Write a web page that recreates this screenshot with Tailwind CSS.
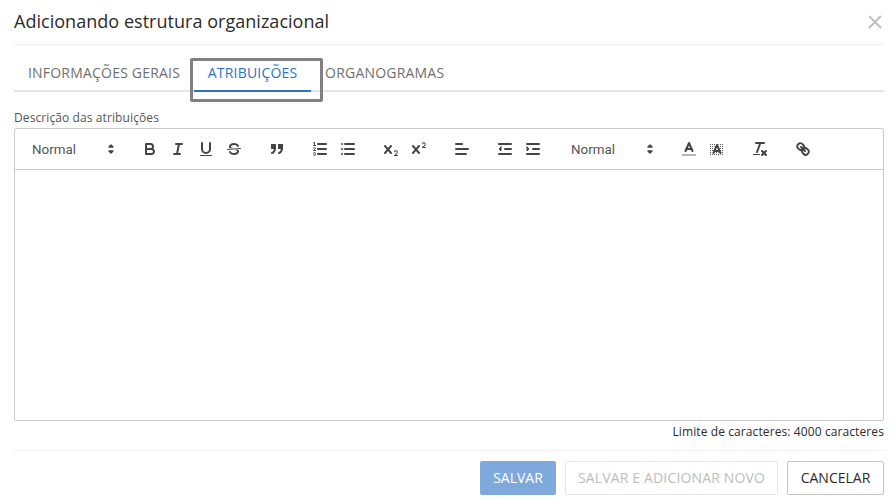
<!DOCTYPE html>
<html lang="pt-BR">
<head>
  <meta charset="UTF-8" />
  <title>Adicionando estrutura organizacional</title>
  <script src="https://cdn.jsdelivr.net/npm/@tailwindcss/browser@4"></script>
</head>
<body class="bg-white font-['Open_Sans',sans-serif] text-[#212529] overflow-hidden">
  <div class="h-[499px] w-[896px] pl-[14px] pr-[12px] flex flex-col">
    <!-- Header -->
    <header class="h-[45px] shrink-0 flex justify-between items-center border-b border-[#f1f1f3] pb-[2px]">
      <h1 class="text-[18px] tracking-[0.03px] leading-6 text-[#2b2b2b]">Adicionando estrutura organizacional</h1>
      <button class="mt-[1px] mr-[2px]">
        <svg viewBox="0 0 14 14" class="w-[14px] h-[14px]" fill="none" stroke="#bdbdbd" stroke-width="1.8"><path d="M1 1l12 12M13 1L1 13"/></svg>
      </button>
    </header>

    <!-- Tabs -->
    <nav class="relative h-[47px] shrink-0 flex border-b-2 border-[#e3e4e8] text-[14px] tracking-[0.2px] text-[#6f6f6f]">
      <div class="pl-[14px] pr-[14px] pt-[18px] leading-[20px]">INFORMAÇÕES GERAIS</div>
      <div class="w-[117px] h-[47px] border-b-2 border-[#2f72c4] text-center pt-[18px] leading-[20px] font-medium text-[#2f72c4]">ATRIBUIÇÕES</div>
      <div class="pl-[14px] pt-[18px] leading-[20px]">ORGANOGRAMAS</div>
      <div class="absolute left-[176px] top-[13px] w-[133px] h-[44px] border-[3px] border-[#808080] rounded-[2px]"></div>
    </nav>

    <label class="block mt-[18px] text-[12px] tracking-[0.1px] leading-[16px] text-[#555]">Descrição das atribuições</label>

    <!-- Editor -->
    <div class="mt-[2px] h-[293px] shrink-0 flex flex-col border border-[#ccc] rounded-[2px]">
      <div class="h-[41px] shrink-0 flex items-center pl-[8px] border-b border-[#ccc]">
        <div class="w-[98px] h-6 mr-[15px] flex items-center justify-between font-['Roboto',sans-serif] text-[13.4px] text-[#555] pl-[9px]">
          <span class="pt-[2px]">Normal</span>
          <svg viewBox="0 0 18 18" class="w-[18px] h-[18px] mr-[1px]" fill="#444" stroke="#444" stroke-width="1.5" stroke-linejoin="round"><polygon points="7 11 9 13 11 11 7 11"/><polygon points="7 7 9 5 11 7 7 7"/></svg>
        </div>

        <div class="flex mr-[15px]">
          <div class="w-7 h-6 flex items-center justify-center"><svg viewBox="0 0 18 18" class="w-[18px] h-[18px]" fill="none" stroke="#444" stroke-width="2" stroke-linecap="round" stroke-linejoin="round"><path d="M5,4H9.5A2.5,2.5,0,0,1,12,6.5v0A2.5,2.5,0,0,1,9.5,9H5A0,0,0,0,1,5,9V4A0,0,0,0,1,5,4Z"/><path d="M5,9h5.5A2.5,2.5,0,0,1,13,11.5v0A2.5,2.5,0,0,1,10.5,14H5a0,0,0,0,1,0,0V9A0,0,0,0,1,5,9Z"/></svg></div>
          <div class="w-7 h-6 flex items-center justify-center"><svg viewBox="0 0 18 18" class="w-[18px] h-[18px]" fill="none" stroke="#444" stroke-width="2" stroke-linecap="round"><line x1="7" x2="13" y1="4" y2="4"/><line x1="5" x2="11" y1="14" y2="14"/><line x1="8" x2="10" y1="14" y2="4"/></svg></div>
          <div class="w-7 h-6 flex items-center justify-center"><svg viewBox="0 0 18 18" class="w-[18px] h-[18px]" fill="none" stroke="#444" stroke-width="2" stroke-linecap="round"><path d="M5,3V9a4.012,4.012,0,0,0,4,4H9a4.012,4.012,0,0,0,4-4V3"/><rect fill="#444" stroke="none" height="1" rx=".5" ry=".5" width="12" x="3" y="15"/></svg></div>
          <div class="w-7 h-6 flex items-center justify-center"><svg viewBox="0 0 18 18" class="w-[18px] h-[18px]" fill="#444"><line stroke="#444" stroke-linecap="round" x1="15.5" x2="2.5" y1="8.5" y2="9.5"/><path d="M9.007,8C6.542,7.791,6,7.519,6,6.5,6,5.792,7.283,5,9,5c1.571,0,2.765.679,2.969,1.309a1,1,0,0,0,1.9-.617C13.356,4.106,11.354,3,9,3,6.2,3,4,4.538,4,6.5a3.2,3.2,0,0,0,.5,1.843Z"/><path d="M8.984,10C11.457,10.208,12,10.479,12,11.5c0,.708-1.283,1.5-3,1.5-1.571,0-2.765-.679-2.969-1.309a1,1,0,1,0-1.9.617C4.644,13.894,6.646,15,9,15c2.8,0,5-1.538,5-3.5a3.2,3.2,0,0,0-.5-1.843Z"/></svg></div>
        </div>

        <div class="flex mr-[15px]">
          <div class="w-7 h-6 flex items-center justify-center"><svg viewBox="0 0 18 18" class="w-[18px] h-[18px]" fill="none" stroke="#444" stroke-width="2" stroke-linecap="round"><rect fill="#444" height="3" width="3" x="4" y="5"/><rect fill="#444" height="3" width="3" x="11" y="5"/><path d="M7,8c0,4.031-3,5-3,5"/><path d="M14,8c0,4.031-3,5-3,5"/></svg></div>
        </div>

        <div class="flex mr-[15px]">
          <div class="w-7 h-6 flex items-center justify-center"><svg viewBox="0 0 18 18" class="w-[18px] h-[18px]" fill="none" stroke="#444" stroke-width="2" stroke-linecap="round" stroke-linejoin="round"><line x1="7" x2="15" y1="4" y2="4"/><line x1="7" x2="15" y1="9" y2="9"/><line x1="7" x2="15" y1="14" y2="14"/><line stroke-width="1" x1="2.5" x2="4.5" y1="5.5" y2="5.5"/><path fill="#444" stroke="none" d="M3.5,6A0.5,0.5,0,0,1,3,5.5V3.085l-0.276.138A0.5,0.5,0,0,1,2.053,3c-0.124-.247-0.023-0.324.224-0.447l1-.5A0.5,0.5,0,0,1,4,2.5v3A0.5,0.5,0,0,1,3.5,6Z"/><path stroke-width="1" d="M4.5,10.5h-2c0-.234,1.85-1.076,1.85-2.234A0.959,0.959,0,0,0,2.5,8.156"/><path stroke-width="1" d="M2.5,14.846a0.959,0.959,0,0,0,1.85-.109A0.7,0.7,0,0,0,3.75,14a0.688,0.688,0,0,0,.6-0.736,0.959,0.959,0,0,0-1.85-.109"/></svg></div>
          <div class="w-7 h-6 flex items-center justify-center"><svg viewBox="0 0 18 18" class="w-[18px] h-[18px]" fill="none" stroke="#444" stroke-width="2" stroke-linecap="round"><line x1="6" x2="15" y1="4" y2="4"/><line x1="6" x2="15" y1="9" y2="9"/><line x1="6" x2="15" y1="14" y2="14"/><line x1="3" x2="3" y1="4" y2="4"/><line x1="3" x2="3" y1="9" y2="9"/><line x1="3" x2="3" y1="14" y2="14"/></svg></div>
        </div>

        <div class="flex mr-[15px]">
          <div class="w-7 h-6 flex items-center justify-center"><svg viewBox="0 0 18 18" class="w-[18px] h-[18px]" fill="#444"><path d="M15.5,15H13.861a3.858,3.858,0,0,0,1.914-2.975,1.8,1.8,0,0,0-1.6-1.751A1.921,1.921,0,0,0,12.021,11.7a0.50013,0.50013,0,1,0,.957.291h0a0.914,0.914,0,0,1,1.053-.725,0.81,0.81,0,0,1,.744.762c0,1.076-1.16971,1.86982-1.93971,2.43082A1.45639,1.45639,0,0,0,12,15.5a0.5,0.5,0,0,0,.5.5h3A0.5,0.5,0,0,0,15.5,15Z"/><path d="M9.65,5.241a1,1,0,0,0-1.409.108L6,7.964,3.759,5.349A1,1,0,0,0,2.192,6.59178Q2.21541,6.6213,2.241,6.649L4.684,9.5,2.241,12.35A1,1,0,0,0,3.71,13.70722q0.02557-.02768.049-0.05722L6,11.036,8.241,13.65a1,1,0,1,0,1.567-1.24277Q9.78459,12.3777,9.759,12.35L7.316,9.5,9.759,6.651A1,1,0,0,0,9.65,5.241Z"/></svg></div>
          <div class="w-7 h-6 flex items-center justify-center"><svg viewBox="0 0 18 18" class="w-[18px] h-[18px]" fill="#444"><path d="M15.5,7H13.861a4.015,4.015,0,0,0,1.914-2.975,1.8,1.8,0,0,0-1.6-1.751A1.922,1.922,0,0,0,12.021,3.7a0.5,0.5,0,1,0,.957.291,0.917,0.917,0,0,1,1.053-.725,0.81,0.81,0,0,1,.744.762c0,1.077-1.164,1.925-1.934,2.486A1.423,1.423,0,0,0,12,7.5a0.5,0.5,0,0,0,.5.5h3A0.5,0.5,0,0,0,15.5,7Z"/><path d="M9.651,5.241a1,1,0,0,0-1.41.108L6,7.964,3.759,5.349a1,1,0,1,0-1.519,1.3L4.683,9.5,2.241,12.35a1,1,0,1,0,1.519,1.3L6,11.036,8.241,13.65a1,1,0,0,0,1.519-1.3L7.317,9.5,9.759,6.651A1,1,0,0,0,9.651,5.241Z"/></svg></div>
        </div>

        <div class="flex mr-[15px]">
          <div class="w-7 h-6 flex items-center justify-center"><svg viewBox="0 0 18 18" class="w-[18px] h-[18px]" fill="none" stroke="#444" stroke-width="2" stroke-linecap="round"><line x1="3" x2="15" y1="9" y2="9"/><line x1="3" x2="13" y1="14" y2="14"/><line x1="3" x2="9" y1="4" y2="4"/></svg></div>
        </div>

        <div class="flex mr-[15px]">
          <div class="w-7 h-6 flex items-center justify-center"><svg viewBox="0 0 18 18" class="w-[18px] h-[18px]" fill="none" stroke="#444" stroke-width="2" stroke-linecap="round" stroke-linejoin="round"><line x1="3" x2="15" y1="14" y2="14"/><line x1="3" x2="15" y1="4" y2="4"/><line x1="9" x2="15" y1="9" y2="9"/><polygon fill="#444" stroke-width="1" points="5 7 5 11 3 9 5 7"/></svg></div>
          <div class="w-7 h-6 flex items-center justify-center"><svg viewBox="0 0 18 18" class="w-[18px] h-[18px]" fill="none" stroke="#444" stroke-width="2" stroke-linecap="round" stroke-linejoin="round"><line x1="3" x2="15" y1="14" y2="14"/><line x1="3" x2="15" y1="4" y2="4"/><line x1="9" x2="15" y1="9" y2="9"/><polygon fill="#444" stroke-width="1" points="3 7 3 11 5 9 3 7"/></svg></div>
        </div>

        <div class="w-[98px] h-6 mr-[15px] flex items-center justify-between font-['Roboto',sans-serif] text-[13.4px] text-[#555] pl-[9px]">
          <span class="pt-[2px]">Normal</span>
          <svg viewBox="0 0 18 18" class="w-[18px] h-[18px] mr-[1px]" fill="#444" stroke="#444" stroke-width="1.5" stroke-linejoin="round"><polygon points="7 11 9 13 11 11 7 11"/><polygon points="7 7 9 5 11 7 7 7"/></svg>
        </div>

        <div class="flex mr-[15px]">
          <div class="w-7 h-6 flex items-center justify-center"><svg viewBox="0 0 18 18" class="w-[18px] h-[18px]" fill="none" stroke="#444" stroke-width="2" stroke-linecap="round" stroke-linejoin="round"><line stroke="#b5b5b5" stroke-linecap="square" x1="3" x2="15" y1="15" y2="15"/><polyline points="5.5 11 9 3 12.5 11"/><line x1="11.63" x2="6.38" y1="9" y2="9"/></svg></div>
          <div class="w-7 h-6 flex items-center justify-center"><svg viewBox="0 0 18 18" class="w-[18px] h-[18px]" fill="none" stroke="#444" stroke-width="2" stroke-linecap="round" stroke-linejoin="round"><defs><pattern id="dots" width="2" height="2" patternUnits="userSpaceOnUse"><rect x="0" y="0" width="1" height="1" fill="#555" stroke="none"/></pattern></defs><rect x="2" y="3" width="14" height="13" fill="url(#dots)" stroke="none"/><polyline stroke="#fff" stroke-width="3" points="5.5 13 9 5 12.5 13"/><polyline points="5.5 13 9 5 12.5 13"/><line x1="11.63" x2="6.38" y1="11" y2="11"/></svg></div>
        </div>

        <div class="flex mr-[15px]">
          <div class="w-7 h-6 flex items-center justify-center"><svg viewBox="0 0 18 18" class="w-[18px] h-[18px]" fill="none" stroke="#444" stroke-width="2" stroke-linecap="round"><line x1="5" x2="13" y1="3" y2="3"/><line x1="6" x2="9.35" y1="12" y2="3"/><line x1="11" x2="15" y1="11" y2="15"/><line x1="15" x2="11" y1="11" y2="15"/><rect fill="#444" stroke="none" height="1" rx=".5" ry=".5" width="7" x="2" y="14"/></svg></div>
        </div>

        <div class="flex">
          <div class="w-7 h-6 flex items-center justify-center"><svg viewBox="0 0 18 18" class="w-[18px] h-[18px]" fill="none" stroke="#444" stroke-width="2" stroke-linecap="round"><line x1="7" x2="11" y1="7" y2="11"/><path d="M8.9,4.577a3.476,3.476,0,0,1,.36,4.679A3.476,3.476,0,0,1,4.577,8.9C3.185,7.5,2.035,6.4,4.217,4.217S7.5,3.185,8.9,4.577Z"/><path d="M13.423,9.1a3.476,3.476,0,0,0-4.679-.36,3.476,3.476,0,0,0,.36,4.679c1.392,1.392,2.5,2.542,4.679.36S14.815,10.5,13.423,9.1Z"/></svg></div>
        </div>
      </div>
      <div class="flex-1"></div>
    </div>

    <p class="mt-[3px] text-right text-[12px] tracking-[0.1px] leading-[16px] text-[#2b2b2b]">Limite de caracteres: 4000 caracteres</p>

    <!-- Footer -->
    <footer class="mt-[10px] pt-[10px] border-t border-[#f1f1f3] flex justify-end gap-[9px] text-[14px]">
      <button class="w-[76px] h-[34px] pb-[2px] rounded-[2px] bg-[#7fa9dc] text-white">SALVAR</button>
      <button class="w-[213px] h-[34px] pb-[2px] rounded-[2px] border border-[#e6e6e6] tracking-[0.15px] text-[#bdbdbd]">SALVAR E ADICIONAR NOVO</button>
      <button class="w-[97px] h-[34px] pb-[2px] rounded-[2px] border border-[#c4c4c4] text-[#2b2b2b]">CANCELAR</button>
    </footer>
  </div>
</body>
</html>
